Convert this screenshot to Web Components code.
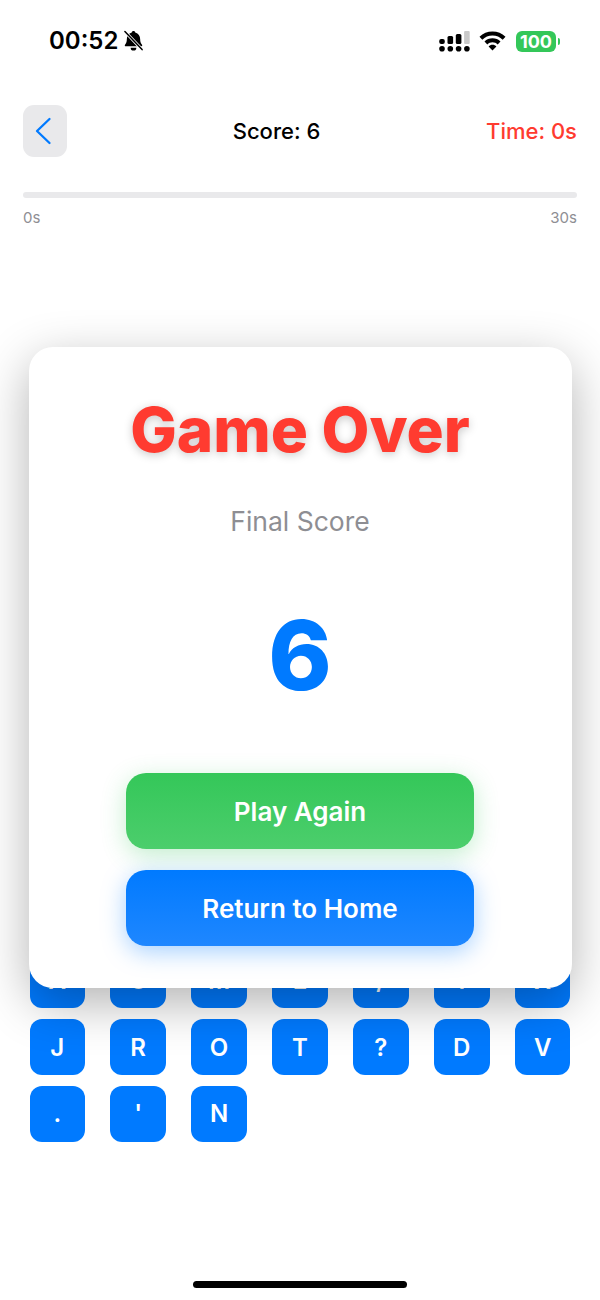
<!DOCTYPE html>
<html>
<head>
<meta charset="utf-8">
<style>
  html, body { margin: 0; padding: 0; background: #fff; }
  body { width: 600px; height: 1300px; overflow: hidden; font-family: Inter, "Liberation Sans", sans-serif; }
</style>
</head>
<body>
<game-screen>
  <status-bar slot="status"></status-bar>
  <game-header slot="header" score="6" time="0"></game-header>
  <time-bar slot="progress"></time-bar>
  <letter-grid slot="keys" letters="A,S,M,E,/,Y,X,J,R,O,T,?,D,V,.,',N"></letter-grid>
  <game-over slot="modal" score="6">
    <action-button color="green">Play Again</action-button>
    <action-button color="blue">Return to Home</action-button>
  </game-over>
</game-screen>

<script>
class GameScreen extends HTMLElement {
  constructor() {
    super();
    this.attachShadow({ mode: 'open' });
    this.shadowRoot.innerHTML = `
      <style>
        :host { display: flex; flex-direction: column; position: relative; width: 600px; height: 1300px; overflow: hidden; }
        .keys { margin-top: 726.500px; }
        .home { position: absolute; left: 193px; top: 1281px; width: 214px; height: 7px; border-radius: 4px; background: #000; }
      </style>
      <slot name="status"></slot>
      <slot name="header"></slot>
      <slot name="progress"></slot>
      <div class="keys"><slot name="keys"></slot></div>
      <slot name="modal"></slot>
      <div class="home"></div>
    `;
  }
}

class StatusBar extends HTMLElement {
  constructor() {
    super();
    this.attachShadow({ mode: 'open' });
    this.shadowRoot.innerHTML = `
      <style>
        :host { display: flex; align-items: center; justify-content: space-between; height: 82px; padding: 0 40px 0 49px; box-sizing: border-box; font-family: Inter, "Liberation Sans", sans-serif; }
        .left, .right { display: flex; align-items: center; }
        .time { font-size: 24px; font-weight: 600; color: #000; line-height: 24px; }
        .bell { margin-left: 5px; }
        .wifi { margin: 0 10px 0 9px; }
        .batt { display: flex; align-items: center; justify-content: center; width: 40px; height: 21px; border-radius: 6px; background: #34c759; color: #fff; font-size: 18px; font-weight: 700; }
        .nub { width: 2px; height: 7px; margin-left: 2px; background: #34c759; border-radius: 0 2px 2px 0; }
      </style>
      <div class="left">
        <span class="time">00:52</span>
        <svg class="bell" width="21" height="22" viewBox="0 0 22 22">
          <path d="M11 .5c1 0 1.800.7 1.800 1.700 3.400.8 5.200 3.600 5.200 7 0 2.600.5 4 1.900 5.600.6.700.1 1.700-.8 1.700H2.900c-.9 0-1.400-1-.8-1.700C3.500 13.200 4 11.800 4 9.200c0-3.400 1.800-6.200 5.200-7C9.200 1.200 10 .5 11 .5z" fill="#000"/>
          <path d="M8 18h6a3 3 0 0 1-6 0z" fill="#000"/>
          <path d="M2 1l18 19" stroke="#fff" stroke-width="3.200"/>
          <path d="M2 1l18 19" stroke="#000" stroke-width="1.600" stroke-linecap="round"/>
        </svg>
      </div>
      <div class="right">
        <svg width="31" height="21" viewBox="0 0 31 21">
          <circle cx="3" cy="17.700" r="2.800" fill="#000"/>
          <circle cx="11.300" cy="17.700" r="2.800" fill="#000"/>
          <circle cx="19.600" cy="17.700" r="2.800" fill="#000"/>
          <circle cx="27.900" cy="17.700" r="2.800" fill="#000"/>
          <rect x="0.200" y="8" width="5.600" height="5" rx="2" fill="#000"/>
          <rect x="8.500" y="5" width="5.600" height="8" rx="1.500" fill="#000"/>
          <rect x="16.800" y="3" width="5.600" height="10" rx="1.500" fill="#000"/>
          <rect x="25.100" y="0" width="5.600" height="13" rx="1" fill="#c9c9c9"/>
        </svg>
        <svg class="wifi" width="27" height="20" viewBox="0 0 27 20">
          <path d="M13.500 0.500C8.500 0.500 4 2.400 0.500 5.800l2.800 3C6 6.100 9.600 4.600 13.500 4.600s7.500 1.500 10.200 4.200l2.800-3C23 2.400 18.500.5 13.500.5z" fill="#000"/>
          <path d="M13.500 7.200c-3.100 0-5.900 1.200-8 3.200l2.800 3c1.400-1.300 3.200-2.100 5.200-2.100s3.800.8 5.200 2.100l2.800-3c-2.100-2-4.900-3.200-8-3.200z" fill="#000"/>
          <path d="M13.500 13.800c-1.500 0-2.900.6-3.900 1.600l3.900 4.100 3.900-4.100c-1-1-2.400-1.600-3.900-1.600z" fill="#000"/>
        </svg>
        <span class="batt">100</span>
        <span class="nub"></span>
      </div>
    `;
  }
}

class GameHeader extends HTMLElement {
  constructor() {
    super();
    this.attachShadow({ mode: 'open' });
    const score = this.getAttribute('score');
    const time = this.getAttribute('time');
    this.shadowRoot.innerHTML = `
      <style>
        :host { display: flex; justify-content: space-between; align-items: center; height: 52px; margin-top: 23px; padding: 0 23px; font-family: Inter, "Liberation Sans", sans-serif; }
        .back { display: flex; align-items: center; justify-content: center; width: 44px; height: 52px; border-radius: 11px; background: #e9e9eb; }
        .score { font-size: 22px; font-weight: 500; color: #000; }
        .time { font-size: 22px; font-weight: 500; color: #ff3b30; }
      </style>
      <div class="back">
        <svg width="18" height="28" viewBox="0 0 18 28" style="margin-right:4px">
          <path d="M15.500 2L3 14l12.500 12" fill="none" stroke="#007aff" stroke-width="2.300" stroke-linecap="round" stroke-linejoin="round"/>
        </svg>
      </div>
      <div class="score">Score: ${score}</div>
      <div class="time">Time: ${time}s</div>
    `;
  }
}

class TimeBar extends HTMLElement {
  constructor() {
    super();
    this.attachShadow({ mode: 'open' });
    this.shadowRoot.innerHTML = `
      <style>
        :host { display: block; margin-top: 35px; padding: 0 23px; font-family: Inter, "Liberation Sans", sans-serif; }
        .track { height: 6px; border-radius: 3px; background: #e9e9eb; }
        .labels { display: flex; justify-content: space-between; margin-top: 11px; font-size: 15px; line-height: 17px; color: #8e8e93; }
      </style>
      <div class="track"></div>
      <div class="labels"><span>0s</span><span>30s</span></div>
    `;
  }
}

class LetterGrid extends HTMLElement {
  constructor() {
    super();
    this.attachShadow({ mode: 'open' });
    const keys = this.getAttribute('letters').split(',');
    this.shadowRoot.innerHTML = `
      <style>
        :host { display: grid; grid-template-columns: repeat(7, 55.600px); grid-auto-rows: 55.500px; justify-content: space-between; row-gap: 11.300px; padding: 0 29.500px; font-family: Inter, "Liberation Sans", sans-serif; }
        .key { display: flex; align-items: center; justify-content: center; border-radius: 12px; background: #007aff; color: #fff; font-size: 24px; font-weight: 600; }
      </style>
      ${keys.map(k => `<div class="key">${k}</div>`).join('')}
    `;
  }
}

class GameOver extends HTMLElement {
  constructor() {
    super();
    this.attachShadow({ mode: 'open' });
    const score = this.getAttribute('score');
    this.shadowRoot.innerHTML = `
      <style>
        :host { position: absolute; left: 28.500px; top: 347px; width: 543px; height: 641px; box-sizing: border-box; display: flex; flex-direction: column; align-items: center; padding-top: 47px; background: #fff; border-radius: 24px; box-shadow: 0 15px 50px rgba(0,0,0,.3); font-family: Inter, "Liberation Sans", sans-serif; }
        h1 { margin: 0; font-size: 62px; line-height: 72px; font-weight: 800; color: #ff3b30; text-shadow: 0 2px 10px rgba(0,0,0,.22); }
        .label { margin-top: 38px; font-size: 26.500px; line-height: 34px; color: #8e8e93; }
        .num { margin-top: 59px; font-size: 96px; line-height: 116px; font-weight: 800; color: #007aff; }
        .actions { display: flex; flex-direction: column; gap: 21px; margin-top: 60px; }
      </style>
      <h1>Game Over</h1>
      <div class="label">Final Score</div>
      <div class="num">${score}</div>
      <div class="actions"><slot></slot></div>
    `;
  }
}

class ActionButton extends HTMLElement {
  constructor() {
    super();
    this.attachShadow({ mode: 'open' });
    this.shadowRoot.innerHTML = `
      <style>
        :host { display: flex; align-items: center; justify-content: center; width: 348px; height: 76px; border-radius: 20px; color: #fff; font-size: 26px; font-weight: 600; font-family: Inter, "Liberation Sans", sans-serif; }
        :host([color=green]) { background: linear-gradient(#34c759, #4cce6c); box-shadow: 0 6px 24px rgba(52,199,89,.3); }
        :host([color=blue]) { background: linear-gradient(#007aff, #1f87ff); box-shadow: 0 6px 24px rgba(0,122,255,.35); }
      </style>
      <slot></slot>
    `;
  }
}

customElements.define('game-screen', GameScreen);
customElements.define('status-bar', StatusBar);
customElements.define('game-header', GameHeader);
customElements.define('time-bar', TimeBar);
customElements.define('letter-grid', LetterGrid);
customElements.define('game-over', GameOver);
customElements.define('action-button', ActionButton);
</script>
</body>
</html>
